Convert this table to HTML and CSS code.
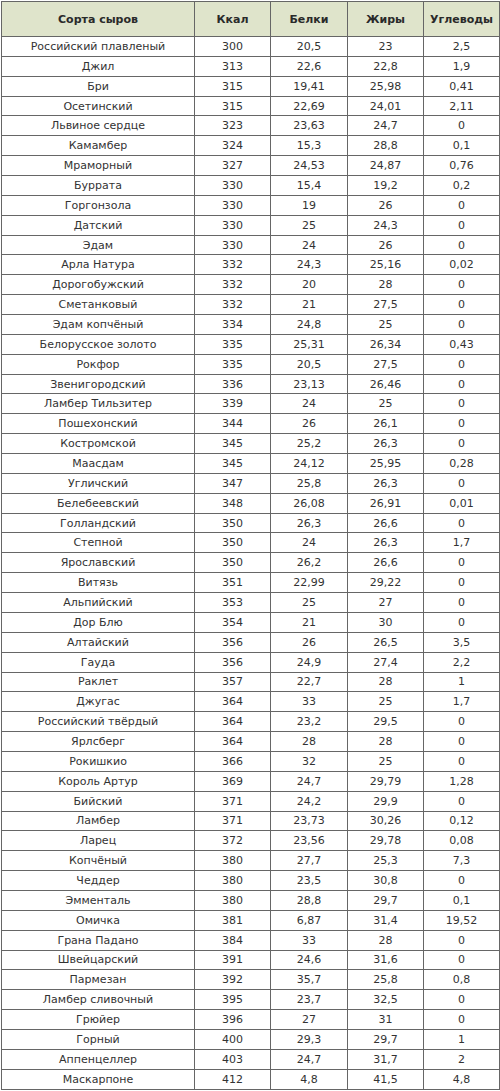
FILE: index.html
```html
<!DOCTYPE html>
<html lang="ru">
<head>
<meta charset="utf-8">
<title>Сорта сыров</title>
<link rel="stylesheet" href="styles.css">
</head>
<body>
<table class="cheese">
<colgroup>
<col class="c-name"><col class="c-num"><col class="c-num2"><col class="c-num"><col class="c-num">
</colgroup>
<thead>
<tr><th>Сорта сыров</th><th>Ккал</th><th>Белки</th><th>Жиры</th><th>Углеводы</th></tr>
</thead>
<tbody>
<tr><td>Российский плавленый</td><td>300</td><td>20,5</td><td>23</td><td>2,5</td></tr>
<tr><td>Джил</td><td>313</td><td>22,6</td><td>22,8</td><td>1,9</td></tr>
<tr><td>Бри</td><td>315</td><td>19,41</td><td>25,98</td><td>0,41</td></tr>
<tr><td>Осетинский</td><td>315</td><td>22,69</td><td>24,01</td><td>2,11</td></tr>
<tr><td>Львиное сердце</td><td>323</td><td>23,63</td><td>24,7</td><td>0</td></tr>
<tr><td>Камамбер</td><td>324</td><td>15,3</td><td>28,8</td><td>0,1</td></tr>
<tr><td>Мраморный</td><td>327</td><td>24,53</td><td>24,87</td><td>0,76</td></tr>
<tr><td>Буррата</td><td>330</td><td>15,4</td><td>19,2</td><td>0,2</td></tr>
<tr><td>Горгонзола</td><td>330</td><td>19</td><td>26</td><td>0</td></tr>
<tr><td>Датский</td><td>330</td><td>25</td><td>24,3</td><td>0</td></tr>
<tr><td>Эдам</td><td>330</td><td>24</td><td>26</td><td>0</td></tr>
<tr><td>Арла Натура</td><td>332</td><td>24,3</td><td>25,16</td><td>0,02</td></tr>
<tr><td>Дорогобужский</td><td>332</td><td>20</td><td>28</td><td>0</td></tr>
<tr><td>Сметанковый</td><td>332</td><td>21</td><td>27,5</td><td>0</td></tr>
<tr><td>Эдам копчёный</td><td>334</td><td>24,8</td><td>25</td><td>0</td></tr>
<tr><td>Белорусское золото</td><td>335</td><td>25,31</td><td>26,34</td><td>0,43</td></tr>
<tr><td>Рокфор</td><td>335</td><td>20,5</td><td>27,5</td><td>0</td></tr>
<tr><td>Звенигородский</td><td>336</td><td>23,13</td><td>26,46</td><td>0</td></tr>
<tr><td>Ламбер Тильзитер</td><td>339</td><td>24</td><td>25</td><td>0</td></tr>
<tr><td>Пошехонский</td><td>344</td><td>26</td><td>26,1</td><td>0</td></tr>
<tr><td>Костромской</td><td>345</td><td>25,2</td><td>26,3</td><td>0</td></tr>
<tr><td>Маасдам</td><td>345</td><td>24,12</td><td>25,95</td><td>0,28</td></tr>
<tr><td>Угличский</td><td>347</td><td>25,8</td><td>26,3</td><td>0</td></tr>
<tr><td>Белебеевский</td><td>348</td><td>26,08</td><td>26,91</td><td>0,01</td></tr>
<tr><td>Голландский</td><td>350</td><td>26,3</td><td>26,6</td><td>0</td></tr>
<tr><td>Степной</td><td>350</td><td>24</td><td>26,3</td><td>1,7</td></tr>
<tr><td>Ярославский</td><td>350</td><td>26,2</td><td>26,6</td><td>0</td></tr>
<tr><td>Витязь</td><td>351</td><td>22,99</td><td>29,22</td><td>0</td></tr>
<tr><td>Альпийский</td><td>353</td><td>25</td><td>27</td><td>0</td></tr>
<tr><td>Дор Блю</td><td>354</td><td>21</td><td>30</td><td>0</td></tr>
<tr><td>Алтайский</td><td>356</td><td>26</td><td>26,5</td><td>3,5</td></tr>
<tr><td>Гауда</td><td>356</td><td>24,9</td><td>27,4</td><td>2,2</td></tr>
<tr><td>Раклет</td><td>357</td><td>22,7</td><td>28</td><td>1</td></tr>
<tr><td>Джугас</td><td>364</td><td>33</td><td>25</td><td>1,7</td></tr>
<tr><td>Российский твёрдый</td><td>364</td><td>23,2</td><td>29,5</td><td>0</td></tr>
<tr><td>Ярлсберг</td><td>364</td><td>28</td><td>28</td><td>0</td></tr>
<tr><td>Рокишкио</td><td>366</td><td>32</td><td>25</td><td>0</td></tr>
<tr><td>Король Артур</td><td>369</td><td>24,7</td><td>29,79</td><td>1,28</td></tr>
<tr><td>Бийский</td><td>371</td><td>24,2</td><td>29,9</td><td>0</td></tr>
<tr><td>Ламбер</td><td>371</td><td>23,73</td><td>30,26</td><td>0,12</td></tr>
<tr><td>Ларец</td><td>372</td><td>23,56</td><td>29,78</td><td>0,08</td></tr>
<tr><td>Копчёный</td><td>380</td><td>27,7</td><td>25,3</td><td>7,3</td></tr>
<tr><td>Чеддер</td><td>380</td><td>23,5</td><td>30,8</td><td>0</td></tr>
<tr><td>Эмменталь</td><td>380</td><td>28,8</td><td>29,7</td><td>0,1</td></tr>
<tr><td>Омичка</td><td>381</td><td>6,87</td><td>31,4</td><td>19,52</td></tr>
<tr><td>Грана Падано</td><td>384</td><td>33</td><td>28</td><td>0</td></tr>
<tr><td>Швейцарский</td><td>391</td><td>24,6</td><td>31,6</td><td>0</td></tr>
<tr><td>Пармезан</td><td>392</td><td>35,7</td><td>25,8</td><td>0,8</td></tr>
<tr><td>Ламбер сливочный</td><td>395</td><td>23,7</td><td>32,5</td><td>0</td></tr>
<tr><td>Грюйер</td><td>396</td><td>27</td><td>31</td><td>0</td></tr>
<tr><td>Горный</td><td>400</td><td>29,3</td><td>29,7</td><td>1</td></tr>
<tr><td>Аппенцеллер</td><td>403</td><td>24,7</td><td>31,7</td><td>2</td></tr>
<tr><td>Маскарпоне</td><td>412</td><td>4,8</td><td>41,5</td><td>4,8</td></tr>
</tbody>
</table>
</body>
</html>
```

FILE: styles.css
```css
html, body {
  margin: 0;
  padding: 0;
  background: #ffffff;
}

.cheese {
  margin: 1px 0 0 1px;
  width: 498px;
  border-collapse: collapse;
  table-layout: fixed;
  font-family: "DejaVu Sans", Verdana, sans-serif;
  font-size: 11px;
  color: #333333;
}

.c-name { width: 193px; }
.c-num { width: 76px; }
.c-num2 { width: 77px; }

.cheese th,
.cheese td {
  border: 1px solid #666666;
  padding: 0;
  text-align: center;
  vertical-align: middle;
  overflow: hidden;
  white-space: nowrap;
}

.cheese th {
  height: 34px;
  background: #dfe4cb;
  font-weight: bold;
  color: #2a2a2a;
}

.cheese td {
  height: 18.86px;
}
```
